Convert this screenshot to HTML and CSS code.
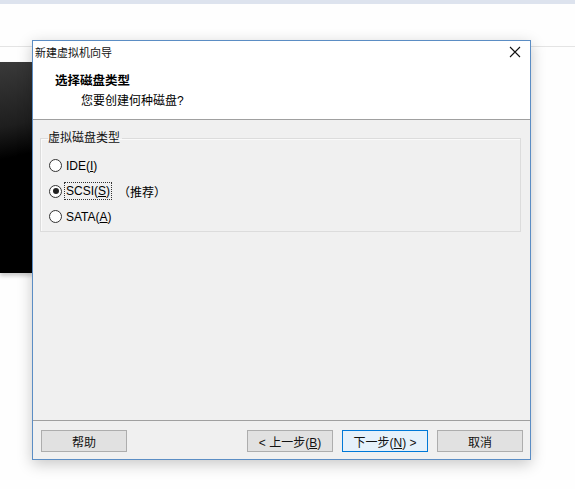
FILE: index.html
```html
<!DOCTYPE html>
<html lang="zh">
<head>
<meta charset="utf-8">
<title>新建虚拟机向导</title>
<link rel="stylesheet" href="styles.css">
</head>
<body>
<div class="desktop">
  <div class="topstrip"></div>
  <div class="hline"></div>
  <div class="darkpanel"></div>

  <div class="dialog">
    <div class="titlebar">
      <span class="title">新建虚拟机向导</span>
      <svg class="close" width="12" height="12" viewBox="0 0 12 12"><path d="M1 1 L11 11 M11 1 L1 11" stroke="#111" stroke-width="1.1" fill="none"/></svg>
    </div>
    <div class="header">
      <div class="h-title">选择磁盘类型</div>
      <div class="h-sub">您要创建何种磁盘?</div>
    </div>
    <div class="body">
      <fieldset class="group">
        <legend>虚拟磁盘类型</legend>
        <div class="radio"><span class="circle"></span><span class="lbl">IDE(<u>I</u>)</span></div>
        <div class="radio"><span class="circle checked"></span><span class="lbl focus">SCSI(<u>S</u>)</span><span class="rec">（推荐）</span></div>
        <div class="radio"><span class="circle"></span><span class="lbl">SATA(<u>A</u>)</span></div>
      </fieldset>
    </div>
    <div class="footer">
      <button class="btn">帮助</button>
      <span class="spacer"></span>
      <button class="btn">&lt; 上一步(<u>B</u>)</button>
      <button class="btn primary">下一步(<u>N</u>) &gt;</button>
      <button class="btn">取消</button>
    </div>
  </div>
</div>
</body>
</html>
```

FILE: styles.css
```css
html, body {
  margin: 0;
  padding: 0;
  background: #ffffff;
}
body {
  font-family: "Liberation Sans", "Noto Sans CJK SC", sans-serif;
  font-size: 12px;
  color: #000;
}
.desktop {
  position: relative;
  width: 575px;
  height: 489px;
  overflow: hidden;
  background: #fefefe;
}
.topstrip {
  height: 4px;
  background: #dde3ee;
}
.hline {
  position: absolute;
  left: 0;
  right: 0;
  top: 46px;
  height: 1px;
  background: #e4e4e4;
}
.darkpanel {
  position: absolute;
  left: 0;
  top: 62px;
  width: 33px;
  height: 211px;
  background: linear-gradient(170deg, #3a3a3a 0%, #1e1e1e 30%, #000 45%, #000 100%);
  box-shadow: 0 3px 4px rgba(0,0,0,0.2);
}
.dialog {
  position: absolute;
  left: 32px;
  top: 40px;
  width: 497px;
  height: 418px;
  border: 1px solid #5b8dc4;
  background: #f0f0f0;
  display: flex;
  flex-direction: column;
  box-shadow: 0 4px 14px rgba(0,0,0,0.22);
}
.titlebar {
  height: 22px;
  background: #fff;
  display: flex;
  align-items: center;
  padding: 0 9px 0 2px;
}
.title {
  flex: 1;
  font-size: 11px;
  color: #111;
}
.close {
  display: block;
}
.header {
  background: #fff;
  border-bottom: 1px solid #a0a0a0;
  padding-left: 22px;
  box-sizing: border-box;
  height: 57px;
}
.h-title {
  font-weight: bold;
  font-size: 12.5px;
  margin-top: 10px;
  line-height: 16px;
}
.h-sub {
  margin-left: 26px;
  margin-top: 4px;
  line-height: 16px;
}
.body {
  flex: 1;
  padding: 11px 9px 0 7px;
  border-bottom: 1px solid #a0a0a0;
}
.group {
  margin: 0;
  border: 1px solid #dcdcdc;
  box-shadow: inset 1px 1px 0 #fafafa;
  padding: 8px 8px 8px 8px;
  height: 101px;
  box-sizing: border-box;
}
.group legend {
  padding: 0 2px 0 0;
  margin-left: -1px;
  line-height: 14px;
  color: #111;
}
.radio {
  display: flex;
  align-items: center;
  height: 25.5px;
}
.circle {
  width: 13px;
  height: 13px;
  border: 1px solid #333;
  border-radius: 50%;
  background: #fff;
  box-sizing: border-box;
  margin-right: 2px;
  position: relative;
}
.circle.checked::after {
  content: "";
  position: absolute;
  left: 2.5px;
  top: 2.5px;
  width: 6px;
  height: 6px;
  border-radius: 50%;
  background: #222;
}
.lbl {
  padding: 1px 1px;
  border: 1px dotted transparent;
  line-height: 14px;
}
.lbl.focus {
  border-color: #333;
}
.rec {
  margin-left: 6px;
}
.footer {
  height: 38px;
  display: flex;
  align-items: flex-start;
  padding: 9px 7px 0 8px;
  box-sizing: border-box;
  gap: 9px;
}
.spacer {
  flex: 1;
}
.btn {
  width: 86px;
  height: 22px;
  border: 1px solid #adadad;
  background: #e1e1e1;
  font-family: "Liberation Sans", "Noto Sans CJK SC", sans-serif;
  font-size: 12px;
  color: #111;
  padding: 0;
  margin: 0;
}
.btn.primary {
  border-color: #0078d7;
  background: #e5f1fb;
}
```
